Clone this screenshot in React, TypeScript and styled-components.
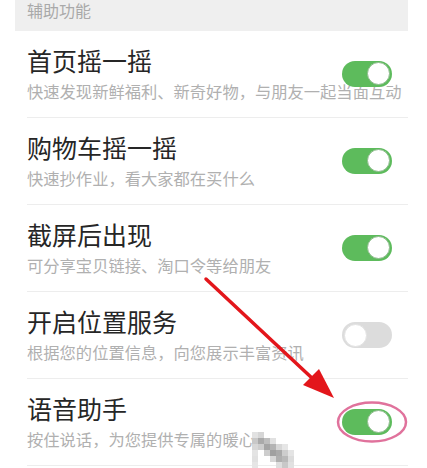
import React from "react";
import styled, { createGlobalStyle } from "styled-components";

const Global = createGlobalStyle`
  html, body { margin: 0; padding: 0; background: #ffffff; }
  #root { width: 427px; height: 468px; overflow: hidden; }
  * { box-sizing: border-box; }
`;

const Page = styled.div`
  position: relative;
  width: 427px;
  height: 468px;
  padding: 0 19px 0 15px;
  font-family: "Noto Sans CJK SC", "Noto Sans", sans-serif;
  background: #ffffff;
`;

const SectionHeader = styled.div`
  height: 31px;
  background: #efefef;
  padding: 1px 12px 0;
  font-size: 16px;
  line-height: 19px;
  color: #a9a9a9;
`;

const Row = styled.div`
  display: grid;
  grid-template-columns: 1fr auto;
  height: 87px;
  margin-left: 12px;
  border-bottom: 1px solid #ededed;
`;

const TextBlock = styled.div`
  grid-area: 1 / 1 / 2 / 3;
  padding-top: 13px;
  min-width: 0;
`;

const Title = styled.div`
  font-size: 25px;
  line-height: 32px;
  color: #262626;
  white-space: nowrap;
`;

const Subtitle = styled.div`
  margin-top: 4px;
  font-size: 16.3px;
  line-height: 22px;
  color: #b0b0b0;
  white-space: nowrap;
  overflow: hidden;
`;

const Switch = styled.div<{ $on: boolean }>`
  grid-area: 1 / 2 / 2 / 3;
  align-self: center;
  justify-self: end;
  margin-right: 16px;
  margin-top: ${(p) => (p.$on ? "-1px" : "0")};
  position: relative;
  z-index: 1;
  width: 50px;
  height: 26px;
  border-radius: 13px;
  background: ${(p) => (p.$on ? "#5dbb5c" : "#dcdcdc")};
  display: flex;
  align-items: center;
  justify-content: ${(p) => (p.$on ? "flex-end" : "flex-start")};
  padding: 0 2px;
`;

const Knob = styled.div<{ $on: boolean }>`
  width: 23px;
  height: 23px;
  border-radius: 50%;
  background: #ffffff;
  border: 1px solid ${(p) => (p.$on ? "#8dbb8c" : "#e2e2e2")};
`;

const Overlay = styled.svg`
  position: absolute;
  left: 0;
  top: 0;
  width: 427px;
  height: 468px;
  pointer-events: none;
  z-index: 2;
`;

const items = [
  { title: "首页摇一摇", sub: "快速发现新鲜福利、新奇好物，与朋友一起当面互动", on: true },
  { title: "购物车摇一摇", sub: "快速抄作业，看大家都在买什么", on: true },
  { title: "截屏后出现", sub: "可分享宝贝链接、淘口令等给朋友", on: true },
  { title: "开启位置服务", sub: "根据您的位置信息，向您展示丰富资讯", on: false },
  { title: "语音助手", sub: "按住说话，为您提供专属的暖心", on: true },
];

// mosaic watermark (gray levels, 0 = none)
const mosaic = [
  [0, 0, 0, 0, 0, 0, 0, 0, 0],
  [0, 226, 214, 0, 0, 0, 0, 0, 0],
  [0, 200, 170, 190, 225, 0, 0, 0, 0],
  [0, 215, 205, 165, 180, 215, 230, 0, 0],
  [0, 228, 0, 205, 160, 170, 205, 228, 0],
  [0, 225, 0, 0, 215, 175, 185, 220, 0],
  [0, 230, 0, 0, 0, 222, 200, 225, 0],
];

export default function App() {
  return (
    <>
      <Global />
      <Page>
        <SectionHeader>辅助功能</SectionHeader>
        {items.map((it) => (
          <Row key={it.title}>
            <TextBlock>
              <Title>{it.title}</Title>
              <Subtitle>{it.sub}</Subtitle>
            </TextBlock>
            <Switch $on={it.on}>
              <Knob $on={it.on} />
            </Switch>
          </Row>
        ))}
        <Overlay viewBox="0 0 427 468">
          {mosaic.map((row, r) =>
            row.map((g, c) =>
              g ? (
                <rect
                  key={`${r}-${c}`}
                  x={246 + c * 6}
                  y={426 + r * 6}
                  width={6}
                  height={6}
                  fill={`rgb(${g},${g},${g})`}
                />
              ) : null
            )
          )}
          <line x1="206" y1="279" x2="313" y2="379" stroke="#e3161b" strokeWidth="3.5" strokeLinecap="round" />
          <polygon points="334,398 303,385 319,369" fill="#e3161b" />
          <ellipse cx="372" cy="422" rx="34" ry="19.5" fill="none" stroke="#e0729c" strokeWidth="2.5" />
        </Overlay>
      </Page>
    </>
  );
}
